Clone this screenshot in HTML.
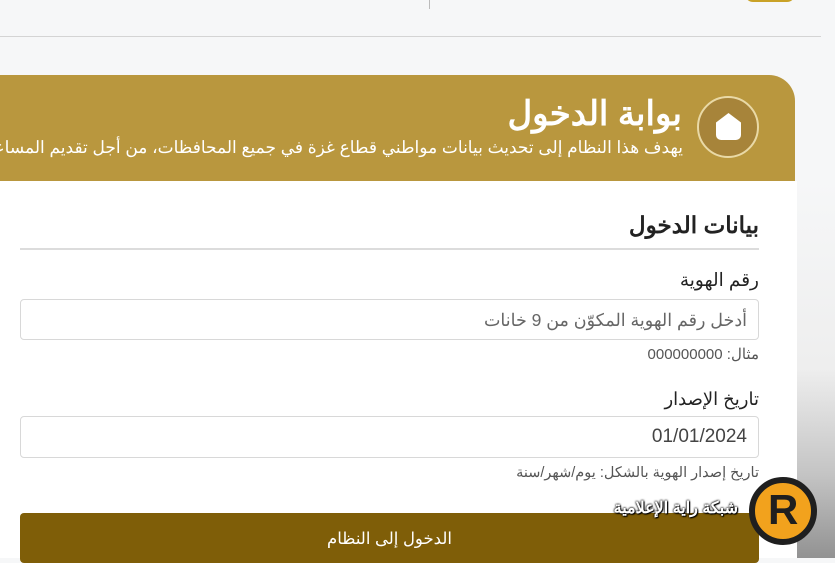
<!DOCTYPE html>
<html><head><meta charset="utf-8"><style>
*{margin:0;padding:0;box-sizing:border-box}
body{width:835px;height:558px;overflow:hidden;background:#f6f7f8;font-family:"Liberation Sans","Noto Sans CJK SC",sans-serif;position:relative}
.abs{position:absolute}
.t{direction:rtl;white-space:nowrap}
</style></head><body>
<div class="abs" style="left:795px;top:180px;width:40px;height:378px;background:linear-gradient(180deg,#f6f7f8 0%,#eeeeee 50%,#c4c4c4 78%,#929292 100%)"></div>
<div class="abs" style="left:429px;top:0;width:1px;height:9px;background:#bbb"></div>
<div class="abs" style="left:745px;top:-6px;width:50px;height:8px;border-radius:0 0 25px 25px;background:#c9a227"></div>
<div class="abs" style="left:0;top:36px;width:821px;height:1px;background:#d4d4d4"></div>
<!-- header -->
<div class="abs" style="left:0;top:75px;width:795px;height:106px;background:#b9973e;border-radius:0 26px 0 0"></div>
<div class="abs" style="left:697px;top:96px;width:62px;height:62px;border-radius:50%;background:#a7843a;border:2px solid #e9d9a6"></div>
<div class="abs" style="left:716px;top:113px;width:25px;height:27px;background:#fff;border-radius:5px;clip-path:polygon(50% 0,100% 35%,100% 100%,0 100%,0 35%)"></div>
<div class="abs t" style="right:153px;top:92px;font-size:34px;font-weight:bold;color:#fff;line-height:44px">بوابة الدخول</div>
<div class="abs t" style="right:152px;top:136px;font-size:17px;color:#fff;line-height:24px">يهدف هذا النظام إلى تحديث بيانات مواطني قطاع غزة في جميع المحافظات، من أجل تقديم المساعدات</div>
<!-- body -->
<div class="abs" style="left:0;top:181px;width:797px;height:377px;background:#fff"></div>
<div class="abs t" style="right:76px;top:210px;font-size:23px;font-weight:bold;color:#222;line-height:30px">بيانات الدخول</div>
<div class="abs" style="left:20px;top:248px;width:739px;height:2px;background:#dcdcdc"></div>
<div class="abs t" style="right:76px;top:267px;font-size:18.5px;color:#222;line-height:26px">رقم الهوية</div>
<div class="abs" style="left:20px;top:299px;width:739px;height:41px;border:1px solid #d8d8d8;border-radius:4px"></div>
<div class="abs t" style="right:88px;top:308px;font-size:17.5px;color:#666;line-height:24px">أدخل رقم الهوية المكوّن من 9 خانات</div>
<div class="abs t" style="right:76px;top:345px;font-size:15px;color:#555;line-height:20px">مثال: 000000000</div>
<div class="abs t" style="right:76px;top:386px;font-size:18px;color:#222;line-height:26px">تاريخ الإصدار</div>
<div class="abs" style="left:20px;top:416px;width:739px;height:42px;border:1px solid #d8d8d8;border-radius:4px"></div>
<div class="abs t" style="right:88px;top:425px;font-size:19px;color:#444;line-height:24px">01/01/2024</div>
<div class="abs t" style="right:76px;top:463px;font-size:14.5px;color:#555;line-height:20px">تاريخ إصدار الهوية بالشكل: يوم/شهر/سنة</div>
<div class="abs" style="left:20px;top:513px;width:739px;height:50px;background:#7f5e08;border-radius:4px"></div>
<div class="abs t" style="left:0;width:779px;top:528px;text-align:center;font-size:16.5px;color:#fff;line-height:22px;direction:rtl">الدخول إلى النظام</div>
<!-- watermark -->
<div class="abs t" style="right:97px;top:498px;font-size:16px;font-weight:bold;color:#fff;line-height:22px;text-shadow:0 0 2px #000,0 0 2px #000,1px 1px 1px #000">شبكة راية الإعلامية</div>
<div class="abs" style="left:749px;top:477px;width:68px;height:68px;border-radius:50%;background:#f2a21d;border:6px solid #1f1f1f"></div>
<div class="abs" style="left:768px;top:484px;font-size:42px;font-weight:bold;color:#1f1f1f;line-height:52px">R</div>
</body></html>
